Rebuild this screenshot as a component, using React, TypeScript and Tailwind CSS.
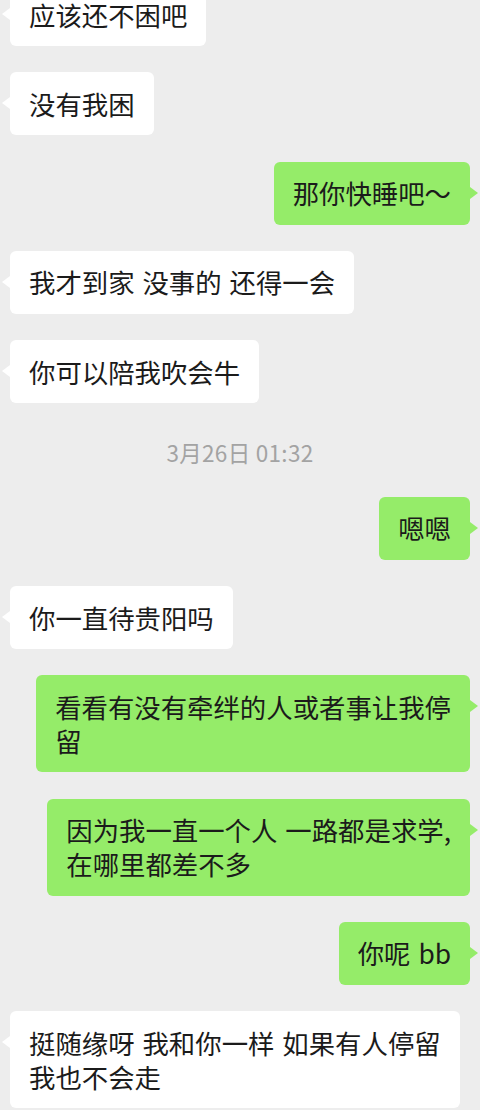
import React from 'react';

type Msg =
  | { kind: 'in' | 'out'; lines: string[] }
  | { kind: 'time'; text: string };

const messages: Msg[] = [
  { kind: 'in', lines: ['应该还不困吧'] },
  { kind: 'in', lines: ['没有我困'] },
  { kind: 'out', lines: ['那你快睡吧～'] },
  { kind: 'in', lines: ['我才到家 没事的 还得一会'] },
  { kind: 'in', lines: ['你可以陪我吹会牛'] },
  { kind: 'time', text: '3月26日 01:32' },
  { kind: 'out', lines: ['嗯嗯'] },
  { kind: 'in', lines: ['你一直待贵阳吗'] },
  { kind: 'out', lines: ['看看有没有牵绊的人或者事让我停', '留'] },
  { kind: 'out', lines: ['因为我一直一个人 一路都是求学,', '在哪里都差不多'] },
  { kind: 'out', lines: ['你呢 bb'] },
  { kind: 'in', lines: ['挺随缘呀 我和你一样 如果有人停留', '我也不会走'] },
];

function Bubble({ kind, lines }: { kind: 'in' | 'out'; lines: string[] }) {
  const mine = kind === 'out';
  return (
    <div className={mine ? 'flex justify-end' : 'flex justify-start'}>
      <div
        className={
          'relative w-fit max-w-[456px] rounded-[6px] px-[19px] py-[14.5px] text-[26.4px] leading-[34px] [word-spacing:2px] text-[#1b1b1b] ' +
          (mine ? 'bg-[#95ec69]' : 'bg-white')
        }
      >
        {mine ? (
          <span className="absolute right-[-8px] top-[25px] h-0 w-0 border-y-[6px] border-l-[8px] border-y-transparent border-l-[#95ec69]" />
        ) : (
          <span className="absolute left-[-8px] top-[25px] h-0 w-0 border-y-[6px] border-r-[8px] border-y-transparent border-r-white" />
        )}
        {lines.map((l, i) => (
          <div key={i} className="whitespace-pre">{l}</div>
        ))}
      </div>
    </div>
  );
}

export default function App() {
  return (
    <div
      className="h-[1110px] w-full overflow-hidden bg-[#ededed] px-[10px]"
      style={{ fontFamily: '"Noto Sans CJK SC", "Noto Sans", sans-serif' }}
    >
      <div className="mt-[-17px] flex flex-col gap-[26.3px]">
        {messages.map((m, i) =>
          m.kind === 'time' ? (
            <div key={i} className="pt-[7px] pb-[2px] text-center text-[22.5px] leading-[32px] tracking-[0.3px] text-[#a3a3a3]">
              {m.text}
            </div>
          ) : (
            <Bubble key={i} kind={m.kind} lines={m.lines} />
          )
        )}
      </div>
    </div>
  );
}
